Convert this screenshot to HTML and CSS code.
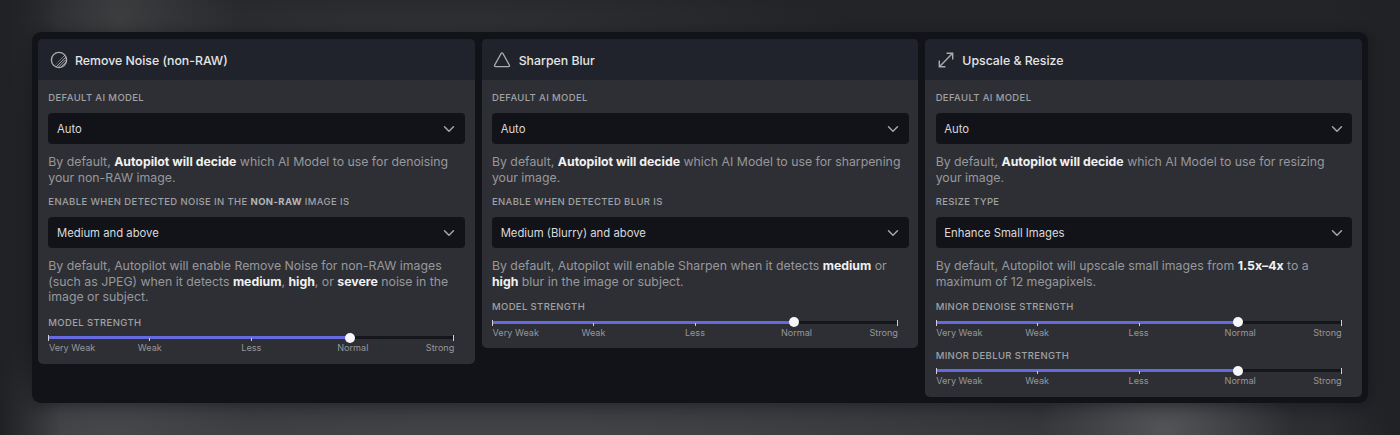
FILE: index.html
```
<!DOCTYPE html>
<html lang="en">
<head>
<meta charset="utf-8">
<title>Autopilot preferences</title>
<link rel="stylesheet" href="styles.css">
</head>
<body>
<svg class="defs" width="0" height="0">
  <symbol id="chevron" viewBox="0 0 12 8"><path d="M1.5 1.7 6 6.2l4.5-4.5" fill="none" stroke="currentColor" stroke-width="1.5" stroke-linecap="round" stroke-linejoin="round"/></symbol>
</svg>
<main class="panel">
  <section class="card">
    <header class="card-header">
      <svg class="icon" viewBox="0 0 18 18">
        <clipPath id="disc"><path d="M16 2.5V17H2.5Z"/></clipPath>
        <g clip-path="url(#disc)"><path d="M3.8 15.2 15.2 3.8M6 15.9 15.9 6M8.5 16 16 8.5M11.2 16 16 11.2" fill="none" stroke="currentColor" stroke-width="1"/></g>
        <circle cx="9" cy="9" r="7.6" fill="none" stroke="currentColor" stroke-width="1.4"/>
      </svg>
      <h2 class="title">Remove Noise (non-RAW)</h2>
    </header>
    <div class="card-body">
      <div class="label">DEFAULT AI MODEL</div>
      <div class="select"><span>Auto</span><svg class="chevron"><use href="#chevron"/></svg></div>
      <p class="hint">By default, <b>Autopilot will decide</b> which AI Model to use for denoising<br>your non-RAW image.</p>
      <div class="label">ENABLE WHEN DETECTED NOISE IN THE <b>NON-RAW</b> IMAGE IS</div>
      <div class="select"><span>Medium and above</span><svg class="chevron"><use href="#chevron"/></svg></div>
      <p class="hint">By default, Autopilot will enable Remove Noise for non-RAW images<br>(such as JPEG) when it detects <b>medium</b>, <b>high</b>, or <b>severe</b> noise in the<br>image or subject.</p>
      <div class="strength">
        <div class="label">MODEL STRENGTH</div>
        <div class="slider"><div class="fill"></div><i class="tick end t0"></i><i class="tick t1"></i><i class="tick t2"></i><i class="tick end t4"></i><i class="thumb"></i></div>
        <div class="scale"><span>Very Weak</span><span>Weak</span><span>Less</span><span>Normal</span><span>Strong</span></div>
      </div>
    </div>
  </section>

  <section class="card">
    <header class="card-header">
      <svg class="icon" viewBox="0 0 18 18"><path d="M8.1 2.5 1.7 14c-.5.9 0 1.6.9 1.6h12.8c.9 0 1.4-.7.9-1.6L9.9 2.5c-.5-.8-1.3-.8-1.8 0Z" fill="none" stroke="currentColor" stroke-width="1.4" stroke-linejoin="round"/></svg>
      <h2 class="title">Sharpen Blur</h2>
    </header>
    <div class="card-body">
      <div class="label">DEFAULT AI MODEL</div>
      <div class="select"><span>Auto</span><svg class="chevron"><use href="#chevron"/></svg></div>
      <p class="hint">By default, <b>Autopilot will decide</b> which AI Model to use for sharpening<br>your image.</p>
      <div class="label">ENABLE WHEN DETECTED BLUR IS</div>
      <div class="select"><span>Medium (Blurry) and above</span><svg class="chevron"><use href="#chevron"/></svg></div>
      <p class="hint">By default, Autopilot will enable Sharpen when it detects <b>medium</b> or<br><b>high</b> blur in the image or subject.</p>
      <div class="strength">
        <div class="label">MODEL STRENGTH</div>
        <div class="slider"><div class="fill"></div><i class="tick end t0"></i><i class="tick t1"></i><i class="tick t2"></i><i class="tick end t4"></i><i class="thumb"></i></div>
        <div class="scale"><span>Very Weak</span><span>Weak</span><span>Less</span><span>Normal</span><span>Strong</span></div>
      </div>
    </div>
  </section>

  <section class="card">
    <header class="card-header">
      <svg class="icon" viewBox="0 0 18 18"><path d="M2.6 15.4 15.4 2.6M9.6 2.3h6.1v6.1M2.3 9.6v6.1h6.1" fill="none" stroke="currentColor" stroke-width="1.4"/></svg>
      <h2 class="title">Upscale &amp; Resize</h2>
    </header>
    <div class="card-body">
      <div class="label">DEFAULT AI MODEL</div>
      <div class="select"><span>Auto</span><svg class="chevron"><use href="#chevron"/></svg></div>
      <p class="hint">By default, <b>Autopilot will decide</b> which AI Model to use for resizing<br>your image.</p>
      <div class="label">RESIZE TYPE</div>
      <div class="select"><span>Enhance Small Images</span><svg class="chevron"><use href="#chevron"/></svg></div>
      <p class="hint">By default, Autopilot will upscale small images from <b>1.5x–4x</b> to a<br>maximum of 12 megapixels.</p>
      <div class="strength">
        <div class="label">MINOR DENOISE STRENGTH</div>
        <div class="slider"><div class="fill"></div><i class="tick end t0"></i><i class="tick t1"></i><i class="tick t2"></i><i class="tick end t4"></i><i class="thumb"></i></div>
        <div class="scale"><span>Very Weak</span><span>Weak</span><span>Less</span><span>Normal</span><span>Strong</span></div>
      </div>
      <div class="strength">
        <div class="label">MINOR DEBLUR STRENGTH</div>
        <div class="slider"><div class="fill"></div><i class="tick end t0"></i><i class="tick t1"></i><i class="tick t2"></i><i class="tick end t4"></i><i class="thumb"></i></div>
        <div class="scale"><span>Very Weak</span><span>Weak</span><span>Less</span><span>Normal</span><span>Strong</span></div>
      </div>
    </div>
  </section>
</main>
</body>
</html>
```
FILE: styles.css
```
* { box-sizing: border-box; }
body {
  margin: 0;
  height: 435px;
  padding: 32px;
  overflow: hidden;
  font-family: Inter, "Liberation Sans", sans-serif;
  background:
    linear-gradient(90deg, #202125, transparent 60px, transparent 1330px, #202125),
    radial-gradient(ellipse 120px 170px at 120px 20px, #3c3d3f, transparent),
    radial-gradient(ellipse 130px 75px at 1165px 430px, #535457, transparent),
    radial-gradient(ellipse 150px 90px at 110px 440px, #47484b, transparent),
    radial-gradient(ellipse 1100px 130px at 500px 460px, #434448 20%, transparent),
    radial-gradient(ellipse 450px 70px at 420px 40px, #323335, transparent),
    #232428;
}
.defs { position: absolute; }
.panel {
  height: 371px;
  padding: 7px 6px 6px;
  display: grid;
  grid-template-columns: repeat(3, 1fr);
  gap: 7px;
  align-items: start;
  background: #121318;
  border-radius: 9px;
  box-shadow: 0 2px 14px rgba(10, 11, 15, .4);
}
.card { background: #2e2f34; border-radius: 5px; overflow: hidden; }
.card-header {
  height: 41px;
  padding-left: 11.5px;
  display: flex;
  align-items: center;
  gap: 7.5px;
  background: #20232b;
}
.icon { width: 18px; height: 18px; color: #a9abaf; }
.title { margin: 0; padding-top: 2px; font-size: 12.3px; font-weight: 500; line-height: 18px; color: #e4e5e7; }
.card-body { padding: 10px 9.7px 11px 10.3px; }
.label { padding-top: .6px; font-size: 9.5px; font-weight: 450; line-height: 13.4px; letter-spacing: .37px; color: #a0a1a5; white-space: nowrap; }
.label b { font-weight: 700; color: #b5b6b9; }
.strength .label { padding: 0 0 .6px; }
.select {
  height: 31px;
  margin-top: 9px;
  padding: 0 9.5px 0 8.7px;
  display: flex;
  align-items: center;
  justify-content: space-between;
  border-radius: 4px;
  background: #121318;
  color: #d9dadc;
  font-size: 11.3px;
}
.chevron { width: 12px; height: 8px; color: #a4a5a9; }
.hint { margin: 10px 0 9px; font-size: 12.3px; line-height: 15.6px; color: #97989c; white-space: nowrap; }
.hint b { font-weight: 700; color: #f1f1f2; }
.strength { height: 37px; }
.hint + .strength { margin-top: 11px; }
.strength + .strength { margin-top: 11.5px; }
.slider { position: relative; width: 406px; height: 3px; margin-top: 6.5px; background: #15161a; }
.fill { width: 302px; height: 3px; background: #656bdf; }
.tick { position: absolute; top: 2px; width: 1px; height: 3px; background: #d0d0d8; }
.tick.end { top: -1px; width: 1px; height: 6px; }
.t0 { left: 0; }
.t1 { left: 101px; }
.t2 { left: 203px; }
.t4 { right: 0; }
.thumb { position: absolute; left: 297px; top: -3.5px; width: 10px; height: 10px; border-radius: 50%; background: #f7f7f9; }
.scale { width: 406px; margin-top: 3px; display: grid; grid-template-columns: 51px 101px 102px 101px 51px; font-size: 9.1px; line-height: 12px; color: #96979b; white-space: nowrap; text-align: center; }
.scale span:first-child { text-align: left; padding-left: .6px; }
.scale span:last-child { display: flex; justify-content: flex-end; }
```
